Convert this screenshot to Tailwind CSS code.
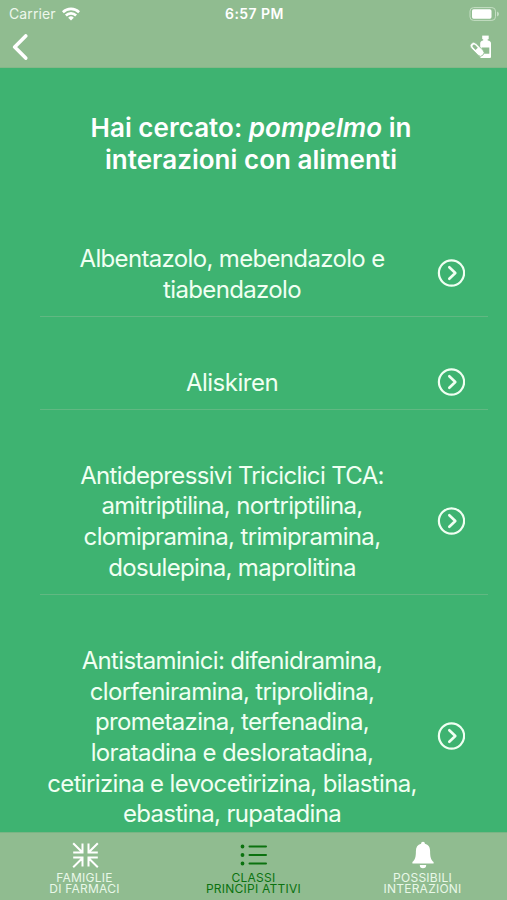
<!DOCTYPE html>
<html lang="it">
<head>
    <meta charset="UTF-8">
    <meta name="viewport" content="width=device-width, initial-scale=1.0">
    <title>Classi principi attivi</title>
    <script src="https://cdn.jsdelivr.net/npm/@tailwindcss/browser@4"></script>
</head>
<body class="bg-[#3eb371] font-['Inter','Liberation_Sans',sans-serif] text-white">
    <div class="flex flex-col h-[900px] overflow-hidden">
        <!-- Header -->
        <header class="shrink-0 h-[68px] bg-[#90bc90] border-b border-[#84b788]">
            <div class="grid grid-cols-3 items-center h-[27px] pl-[9px] pr-[7px]">
                <div class="flex items-center gap-[6px] text-[14px] text-[#edf7ec]">
                    <span class="tracking-[0.1px]">Carrier</span>
                    <svg class="w-[18px] h-[14px]" viewBox="0 0 18 14" fill="none" stroke="#fff" stroke-width="2.6">
                        <path d="M.9 5.200a11.600 11.600 0 0 1 16.200 0"/>
                        <path d="M3.900 8.500a7.200 7.200 0 0 1 10.200 0"/>
                        <path d="M9 13.600l-2.800-2.900a4 4 0 0 1 5.600 0z" fill="#fff" stroke="none"/>
                    </svg>
                </div>
                <div class="text-center text-[14px] font-semibold tracking-[0.45px]">6:57 PM</div>
                <svg class="w-[31px] h-[14px] justify-self-end" viewBox="0 0 31 14" fill="none">
                    <rect x="1" y="0.6" width="25.5" height="12.8" rx="3.6" stroke="#c5dec4"/>
                    <rect x="3" y="2.3" width="19.5" height="9.4" rx="1.6" fill="#fff"/>
                    <path d="M28 4.6v4.8q2-.8 2-2.4t-2-2.4z" fill="#c5dec4"/>
                </svg>
            </div>
            <div class="flex justify-between items-center h-[39px] pl-3 pr-[15px]">
                <svg class="w-4 h-[26px]" viewBox="0 0 16 26" fill="none" stroke="#fff" stroke-width="3.6" stroke-linecap="round" stroke-linejoin="round">
                    <path d="M13.700 1.900L2.700 13l11 11.100"/>
                </svg>
                <svg class="w-[22px] h-6" viewBox="0 0 22 24" fill="none">
                    <path d="M12.200.6h6.500v3.600h-6.500z" fill="#fff"/>
                    <path d="M13.200 4h4.500v1.600q3.300.3 3.300 3v13.300q0 1-1 1h-8.800q-1 0-1-1V8.600q0-2.700 3-3z" fill="#fff"/>
                    <path d="M11.500 12.600h7.800v6.200h-5z" fill="#90bc90"/>
                    <g transform="rotate(45 7 14.200)">
                        <rect x="-1.200" y="10.700" width="16.600" height="7" rx="3.500" fill="#fff" stroke="#90bc90" stroke-width=".8"/>
                        <path d="M6.600 12.600H2.800a1.600 1.600 0 0 0 0 3.200h3.800z" fill="#90bc90"/>
                    </g>
                </svg>
            </div>
        </header>

        <!-- Results -->
        <main class="flex-1 min-h-0 overflow-hidden">
            <h1 class="h-[125px] pt-[44px] pr-[5px] text-center text-[26px] leading-[31.5px] font-semibold tracking-[0.03px]">Hai cercato: <em>pompelmo</em> in<br>interazioni con alimenti</h1>
            <ul class="ml-10 mr-[19px] text-[24px] leading-[30.7px] tracking-[-0.66px] text-[#f0fff2]">
                <li class="flex items-center h-[124px] pt-[51px] pb-[11px] border-b border-[#61b882]">
                    <p class="w-[384px] text-center whitespace-nowrap">Albentazolo, mebendazolo e<br>tiabendazolo</p>
                    <svg class="w-7 h-7 ml-[13px] -mt-[3px]" viewBox="0 0 28 28" fill="none" stroke="currentColor" stroke-linecap="round" stroke-linejoin="round">
                        <circle cx="14.500" cy="14" r="12.600" stroke-width="2.200"/>
                        <path d="M12.300 8.200l6 5.800-6 5.800" stroke-width="2.600"/>
                    </svg>
                </li>
                <li class="flex items-center h-[93px] pt-[51px] pb-[11px] border-b border-[#61b882]">
                    <p class="w-[384px] text-center whitespace-nowrap tracking-[-0.5px]">Aliskiren</p>
                    <svg class="w-7 h-7 ml-[13px] -mt-[3px]" viewBox="0 0 28 28" fill="none" stroke="currentColor" stroke-linecap="round" stroke-linejoin="round">
                        <circle cx="14.500" cy="14" r="12.600" stroke-width="2.200"/>
                        <path d="M12.300 8.200l6 5.800-6 5.800" stroke-width="2.600"/>
                    </svg>
                </li>
                <li class="flex items-center h-[185px] pt-[51px] pb-[11px] border-b border-[#61b882]">
                    <p class="w-[384px] text-center whitespace-nowrap">Antidepressivi Triciclici TCA:<br>amitriptilina, nortriptilina,<br>clomipramina, trimipramina,<br>dosulepina, maprolitina</p>
                    <svg class="w-7 h-7 ml-[13px] -mt-[3px]" viewBox="0 0 28 28" fill="none" stroke="currentColor" stroke-linecap="round" stroke-linejoin="round">
                        <circle cx="14.500" cy="14" r="12.600" stroke-width="2.200"/>
                        <path d="M12.300 8.200l6 5.800-6 5.800" stroke-width="2.600"/>
                    </svg>
                </li>
                <li class="flex items-center h-[246px] pt-[51px] pb-[11px]">
                    <p class="w-[384px] text-center whitespace-nowrap">Antistaminici: difenidramina,<br>clorfeniramina, triprolidina,<br>prometazina, terfenadina,<br>loratadina e desloratadina,<br>cetirizina e levocetirizina, bilastina,<br>ebastina, rupatadina</p>
                    <svg class="w-7 h-7 ml-[13px] -mt-[5px]" viewBox="0 0 28 28" fill="none" stroke="currentColor" stroke-linecap="round" stroke-linejoin="round">
                        <circle cx="14.500" cy="14" r="12.600" stroke-width="2.200"/>
                        <path d="M12.300 8.200l6 5.800-6 5.800" stroke-width="2.600"/>
                    </svg>
                </li>
            </ul>
        </main>

        <!-- Tab bar -->
        <nav class="shrink-0 grid grid-cols-3 h-[68px] bg-[#90bc90] border-t border-[#7ab584] text-center text-[12px] leading-[11px] tracking-[0.25px] text-[#e9f8e8]">
            <a href="#" class="flex flex-col items-center pt-2">
                <svg class="w-[28px] h-[28px] mb-[3px]" viewBox="0 0 28 28" fill="none" stroke="#fff" stroke-width="2">
                    <path d="M2.200 2.200l8.800 8.800M2.200 11.500h9.300V2.500M26.800 2.200l-8.800 8.800M26.800 11.500h-9.300V2.500M2.200 26.300l8.800-8.800M2.200 16.500h9.300v9M26.800 26.300l-8.800-8.800M26.800 16.500h-9.300v9"/>
                </svg>
                <span>FAMIGLIE<br>DI FARMACI</span>
            </a>
            <a href="#" class="flex flex-col items-center pt-2 text-[#0b720f]">
                <svg class="w-[28px] h-[28px] mb-[3px]" viewBox="0 0 28 28" fill="none" stroke="currentColor" stroke-width="2" stroke-linecap="round">
                    <path d="M9.500 5.500h16.500M9.500 14h16.500M9.500 22.500h16.500"/>
                    <path d="M2.500 5.500h.01M2.500 14h.01M2.500 22.500h.01" stroke-width="3.800"/>
                </svg>
                <span>CLASSI<br>PRINCIPI ATTIVI</span>
            </a>
            <a href="#" class="flex flex-col items-center pt-2">
                <svg class="w-[28px] h-[28px] mb-[3px]" viewBox="0 0 28 28" fill="#fff">
                    <path d="M14 .8c1.200 0 1.900.8 1.900 1.900 3.600.9 5.200 3.600 5.200 7.200 0 6.300.9 8.600 3.500 11.200v1.400H3.400v-1.400c2.600-2.600 3.500-4.900 3.500-11.200 0-3.600 1.600-6.300 5.200-7.200 0-1.100.7-1.900 1.900-1.900z"/>
                    <path d="M10.800 24h6.400a3.200 3.200 0 0 1-6.400 0z"/>
                </svg>
                <span>POSSIBILI<br>INTERAZIONI</span>
            </a>
        </nav>
    </div>
</body>
</html>
